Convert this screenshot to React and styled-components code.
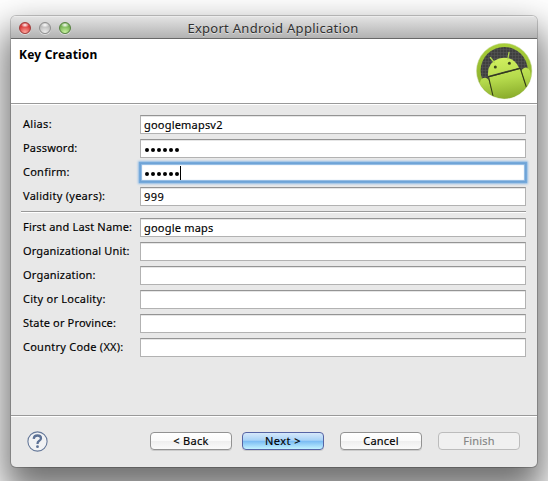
import React from "react";
import styled, { createGlobalStyle } from "styled-components";

const Global = createGlobalStyle`
  * { box-sizing: border-box; }
  html, body { margin: 0; background: #fff; }
  body {
    width: 548px; height: 481px; overflow: hidden;
    font-family: "Noto Sans", "Open Sans", sans-serif;
    font-size: 11px; color: #000;
  }
`;

const Desktop = styled.div`
  width: 548px; height: 481px; overflow: hidden;
  padding: 16px 11px 0;
`;
const Window = styled.main`
  width: 526px; height: 451px;
  display: flex; flex-direction: column;
  border-radius: 5px;
  background: #e8e8e8;
  overflow: hidden;
  box-shadow: 0 0 0 1px rgba(0,0,0,.2), 0 20px 36px 7px rgba(0,0,0,.56);
`;
const TitleBar = styled.header`
  height: 23px; flex: none;
  display: grid; grid-template-columns: 61px 1fr 71px; align-items: center;
  padding: 0 0 0 8px;
  background: linear-gradient(#e2e2e2, #b2b2b2);
  border-top: 1px solid #ececec;
  border-bottom: 1px solid #686868;
`;
const Lights = styled.div`display: flex; gap: 8px;`;
const Light = styled.span`
  width: 12px; height: 12px; flex: none; border-radius: 50%;
  border: 1px solid ${p => p.$edge};
  background: radial-gradient(ellipse 4px 2.5px at 50% 20%, #fff, transparent),
    radial-gradient(circle at 50% 95%, ${p => p.$glow}, ${p => p.$tone} 65%);
  box-shadow: 0 1px 0 rgba(255,255,255,.5);
`;
const Title = styled.h1`
  margin: 0; text-align: center; white-space: nowrap;
  font-size: 13px; line-height: 20px; font-weight: 400; color: #303030;
  letter-spacing: ${p => p.$track};
  text-shadow: 0 1px 0 rgba(255,255,255,.5);
`;
const Banner = styled.section`
  height: 65px; flex: none; background: #fff;
  border-bottom: 1px solid #999;
  display: flex; justify-content: space-between;
  padding: 4px 4px 0 8px;
`;
const Heading = styled.h2`
  margin: 3px 0 0; font-size: 12px; line-height: 18px; font-weight: 700;
  letter-spacing: ${p => p.$track};
`;
const Form = styled.form`
  height: 311px; flex: none;
  border-top: 1px solid #fff;
  padding: 10px 11px 0 10px;
`;
const Group = styled.div`display: flex; flex-direction: column; gap: 5px; padding-left: 2px;`;
const Row = styled.div`
  display: grid; grid-template-columns: 117px 386px; height: 19px; align-items: center;
`;
const Label = styled.label`
  line-height: 16px; margin-top: -2px; white-space: nowrap;
  letter-spacing: ${p => p.$track};
  -webkit-text-stroke: .15px #000;
`;
const Field = styled.div`
  height: 19px; background: #fff;
  border: 1px solid #b2b2b2; border-top-color: #949494;
  box-shadow: ${p => p.$focused
    ? "0 0 1px 1px #75a9db, 0 0 2px 2px #9cc2e8, inset 0 0 1px 1px #8ab6e2"
    : "inset 0 1px 0 #e6e6e6"};
  ${p => p.$focused && "border-color: #6ea3d6;"}
  display: flex; align-items: center;
  padding: 1px 0 0 3px; line-height: 16px; white-space: pre;
  letter-spacing: ${p => p.$track};
  -webkit-text-stroke: .15px #000;
`;
const Dots = styled.span`display: flex; gap: 2px; padding: 2px 0 0 1px;`;
const Dot = styled.i`width: 4px; height: 4px; border-radius: 50%; background: #000;`;
const Caret = styled.i`width: 1px; height: 14px; background: #000; margin-left: 1px;`;
const Divider = styled.hr`
  margin: 5px 0 5px; height: 2px; border: 0;
  border-top: 1px solid #999; background: #fff;
`;
const Footer = styled.footer`
  flex: 1; border-top: 1px solid #999; box-shadow: inset 0 1px 0 #fff;
  display: flex; align-items: flex-start; padding: 16px 17px 0 16px;
`;
const Help = styled.svg`width: 21px; height: 21px; margin-top: -1px; margin-right: 102px;`;
const Button = styled.button`
  width: 82px; height: 18px; padding: 0 0 1px;
  margin-right: ${p => p.$after || 0}px;
  font: 11px/16px "Noto Sans", sans-serif;
  letter-spacing: ${p => p.$track};
  border-radius: 4px;
  border: 1px solid #929292;
  color: #000;
  -webkit-text-stroke: .15px currentColor;
  background: linear-gradient(#fff, #fafafa 48%, #efefef 52%, #fafafa);
  box-shadow: 0 1px 0 rgba(0,0,0,.12);
  ${p => p.$primary && `
    border-color: #5664a4;
    background: linear-gradient(#d6e8fa, #a9d3f7 45%, #7bbcf3 52%, #c2f2ff);
  `}
  &:disabled { color: #858585; border-color: #bcbcbc; background: #f0f0f0; box-shadow: none; }
`;

const AndroidBadge = () => (
  <svg width="57" height="57" viewBox="0 0 57 57">
    <defs>
      <linearGradient id="rim" x1="0" y1="0" x2="0" y2="1">
        <stop offset="0" stopColor="#a9d03a" /><stop offset="1" stopColor="#83a526" />
      </linearGradient>
      <linearGradient id="skin" gradientUnits="userSpaceOnUse" x1="26" y1="14" x2="32" y2="57">
        <stop offset="0" stopColor="#d2f060" /><stop offset=".5" stopColor="#b5da4c" /><stop offset="1" stopColor="#86a828" />
      </linearGradient>
      <pattern id="mesh" width="3" height="3" patternUnits="userSpaceOnUse">
        <rect width="3" height="3" fill="#3f3f3f" />
        <path d="M0 0H3M0 0V3" stroke="#585858" strokeWidth="1" />
      </pattern>
      <clipPath id="disc"><circle cx="28.2" cy="28" r="27.4" /></clipPath>
    </defs>
    <circle cx="28.2" cy="28" r="27.7" fill="url(#rim)" stroke="#c5d49a" strokeWidth=".5" />
    <g clipPath="url(#disc)">
      <circle cx="28.2" cy="27.5" r="23.6" fill="url(#mesh)" />
      <path d="M4 40Q4.5 35 8.5 34.8Q12.3 35 13 38L18 57H0V41Z" fill="url(#skin)" />
      <path d="M45.5 28Q46 25 50 24.5Q53 25 54 28L57 45L52 49Z" fill="url(#skin)" />
      <path d="M12.5 34.5L44.5 26L51 48Q43 57 29 57H18Z" fill="url(#skin)" />
      <path d="M12 33Q11 19.5 23 15.5Q37 12 43 24.7Z" fill="url(#skin)" />
      <path d="M14.3 14.5L18.3 19.5M33 9.5L31.8 16" stroke="#b5da4c" strokeWidth="1.3" strokeLinecap="round" />
      <path d="M11.7 34L44.5 25.3M12.7 34.5L17 53M44.5 26L51 46" stroke="#333c17" strokeWidth="1.1" fill="none" />
      <circle cx="19.3" cy="24" r="1.5" fill="#3d471c" /><circle cx="33.4" cy="20.2" r="1.5" fill="#3d471c" />
    </g>
  </svg>
);

const Bullets = () => <Dots>{[0, 1, 2, 3, 4, 5].map(i => <Dot key={i} />)}</Dots>;

const keyRows = [
  { label: "Alias:", track: "0.3px", value: "googlemapsv2", vt: "0.2px" },
  { label: "Password:", track: "0.2px", secret: true },
  { label: "Confirm:", track: "0.25px", secret: true, focused: true },
  { label: "Validity (years):", track: "0.27px", value: "999", vt: "0.5px" },
];
const ownerRows = [
  { label: "First and Last Name:", track: "0.17px", value: "google maps", vt: "0.2px" },
  { label: "Organizational Unit:", track: "0.15px" },
  { label: "Organization:", track: "0.2px" },
  { label: "City or Locality:", track: "0.25px" },
  { label: "State or Province:", track: "0.15px" },
  { label: "Country Code (XX):", track: "0.25px" },
];

const Rows = ({ items }) => (
  <Group>
    {items.map(r => (
      <Row key={r.label}>
        <Label $track={r.track}>{r.label}</Label>
        <Field $focused={r.focused} $track={r.vt}>
          {r.secret ? <Bullets /> : r.value}
          {r.focused && <Caret />}
        </Field>
      </Row>
    ))}
  </Group>
);

export default function App() {
  return (
    <Desktop>
      <Global />
      <Window>
        <TitleBar>
          <Lights>
            <Light $edge="#a03a38" $tone="#d93a3a" $glow="#ffaaa0" />
            <Light $edge="#8e8e8e" $tone="#bdbdbd" $glow="#ededed" />
            <Light $edge="#55803f" $tone="#77b354" $glow="#ccf5a4" />
          </Lights>
          <Title $track="0.28px">Export Android Application</Title>
        </TitleBar>
        <Banner>
          <Heading $track="0.2px">Key Creation</Heading>
          <AndroidBadge />
        </Banner>
        <Form>
          <Rows items={keyRows} />
          <Divider />
          <Rows items={ownerRows} />
        </Form>
        <Footer>
          <Help viewBox="0 0 21 21">
            <circle cx="10.5" cy="10.5" r="9.6" fill="#f1f2f4" stroke="#66799a" strokeWidth="1.1" />
            <path d="M6.7 7.8Q7 4.5 10.5 4.5Q14 4.5 14 7.3Q14 9 12 10.1Q10.5 11 10.5 13" fill="none" stroke="#5c7195" strokeWidth="2.3" />
            <circle cx="10.5" cy="15.7" r="1.4" fill="#5c7195" />
          </Help>
          <Button $after={10} $track="0.3px">&lt; Back</Button>
          <Button $primary $after={16} $track="0.45px">Next &gt;</Button>
          <Button $after={16} $track="0.2px">Cancel</Button>
          <Button disabled $track="0.2px">Finish</Button>
        </Footer>
      </Window>
    </Desktop>
  );
}
